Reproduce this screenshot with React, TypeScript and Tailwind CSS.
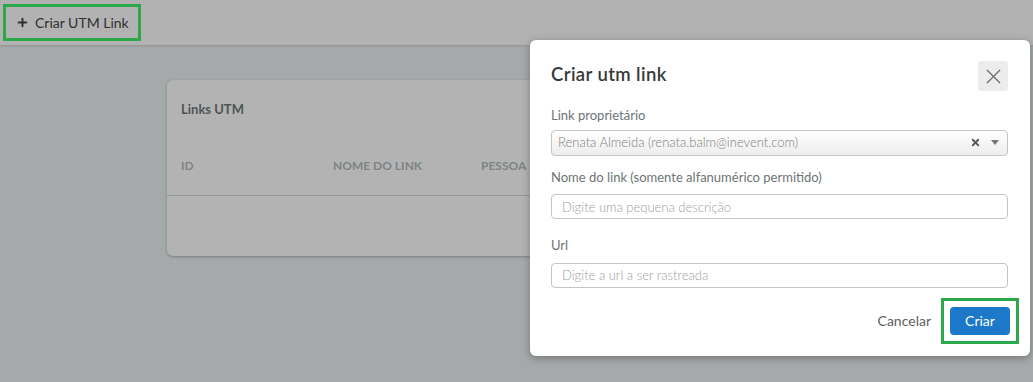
import { Plus, X } from 'lucide-react';

const font = { fontFamily: 'Lato, "Open Sans", sans-serif' };

export default function App() {
  return (
    <div
      className="relative w-[1033px] h-[382px] overflow-hidden bg-[#a6a9a9]"
      style={font}
    >
      {/* page behind overlay */}
      <div className="h-[45px] bg-[#b2b2b2] shadow-[0_1px_2px_rgba(0,0,0,0.15)] flex items-center pl-[3px]">
        <div className="h-[37px] w-[138px] border-[3px] border-[#2aa84a] flex items-center pl-[10px] gap-[6px] text-[14px] text-[#303030]">
          <Plus className="w-[13px] h-[13px]" strokeWidth={3.6} />
          <span>Criar UTM Link</span>
        </div>
      </div>

      <div className="ml-[167px] mt-[35px] w-[700px] h-[176px] rounded-[6px] bg-[#b3b3b3] shadow-[0_1px_3px_rgba(0,0,0,0.25)]">
        <div className="px-[14px] pt-[20px] text-[13px] font-bold text-[#4f5556]">Links UTM</div>
        <div className="flex px-[14px] pt-[37px] pb-[20px] text-[12px] font-bold text-[#7d8485] border-b border-[#989b9b]">
          <div className="w-[152px]">ID</div>
          <div className="w-[148px]">NOME DO LINK</div>
          <div>PESSOA</div>
        </div>
      </div>

      {/* modal */}
      <div className="absolute left-[530px] top-[40px] w-[500px] h-[316px] bg-white rounded-[6px] shadow-[0_2px_8px_rgba(0,0,0,0.3)] px-[21px] pt-[21px]">
        <div className="flex items-start justify-between">
          <h2 className="text-[18.5px] leading-[27px] font-semibold text-[#363a3b] tracking-[0.4px]">Criar utm link</h2>
          <button className="w-[30px] h-[30px] rounded-[3px] bg-[#ececec] flex items-center justify-center mr-[1px]">
            <X className="w-[25px] h-[25px] text-[#666]" strokeWidth={1.1} />
          </button>
        </div>

        <div className="mt-[15px] text-[13px] text-[#6d7475]">Link proprietário</div>
        <div className="mt-[4px] h-[26px] w-[457px] rounded-[4px] border border-[#c4c4c4] bg-gradient-to-b from-white to-[#ededed] flex items-center pl-[6px] pr-[8px] text-[13px] font-light text-[#808080]">
          <span className="flex-1">Renata Almeida (renata.balm@inevent.com)</span>
          <X className="w-[11px] h-[11px] text-[#555] mr-[10px]" strokeWidth={4} />
          <svg width="8" height="5" viewBox="0 0 8 5" className="text-[#777]">
            <path d="M0 0h8L4 5z" fill="currentColor" />
          </svg>
        </div>

        <div className="mt-[12px] text-[13px] text-[#6d7475]">Nome do link (somente alfanumérico permitido)</div>
        <input
          className="mt-[7px] h-[25px] w-[457px] rounded-[4px] border border-[#c4c4c4] px-[10px] text-[13px] font-light outline-none placeholder:text-[#a0a0a0]"
          placeholder="Digite uma pequena descrição"
        />

        <div className="mt-[17px] text-[13px] text-[#6d7475]">Url</div>
        <input
          className="mt-[7px] h-[25px] w-[457px] rounded-[4px] border border-[#c4c4c4] px-[10px] text-[13px] font-light outline-none placeholder:text-[#a0a0a0]"
          placeholder="Digite a url a ser rastreada"
        />

        <div className="mt-[10px] flex items-center justify-end gap-[10px] mr-[-10px]">
          <span className="text-[14px] text-[#606060]">Cancelar</span>
          <div className="border-[3px] border-[#2aa84a] p-[6px]">
            <button className="h-[28px] w-[60px] rounded-[4px] bg-[#1c78c8] text-white text-[14px]">Criar</button>
          </div>
        </div>
      </div>
    </div>
  );
}
